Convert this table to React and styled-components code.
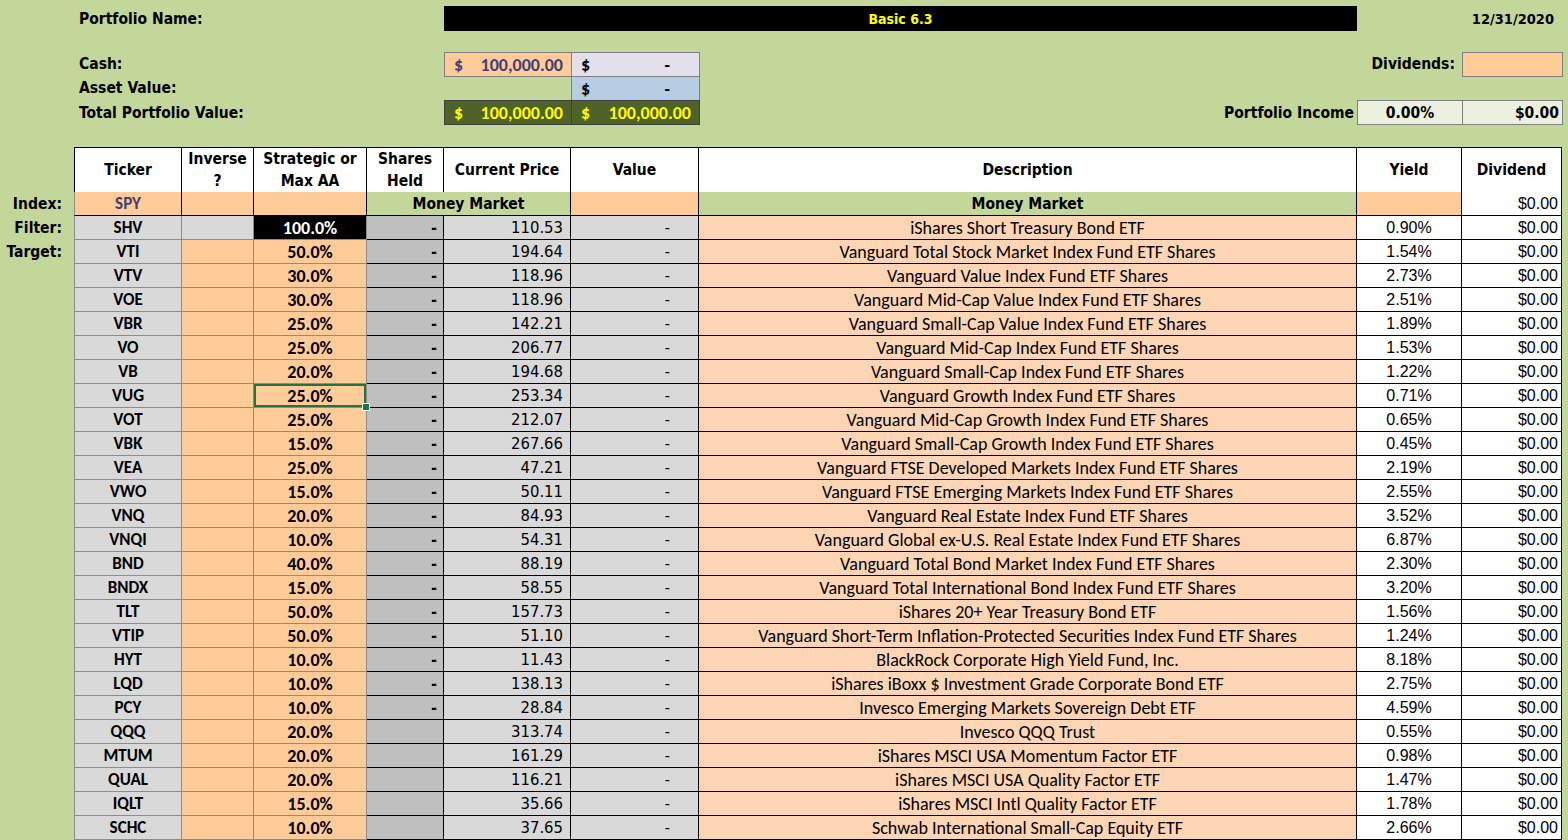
import React from 'react';
import styled, { createGlobalStyle, css } from 'styled-components';

const NARROW = `"Liberation Sans Narrow", "Arial Narrow", "DejaVu Sans Condensed", "Liberation Sans", sans-serif`;
const CALIBRI = `Carlito, Calibri, Lato, "Open Sans", sans-serif`;
const ARIAL = `"Liberation Sans", Arial, sans-serif`;

const COLS = '74px 108px 72px 113px 77px 127px 128px 658px 105px 100px 6px';

const GlobalStyle = createGlobalStyle`
  * { box-sizing: border-box; }
  html, body { margin: 0; padding: 0; background: #c4d79b; overflow: hidden; }
  body { font-family: ${NARROW}; color: #000; }
`;

const Sheet = styled.div`
  width: 1568px;
  height: 840px;
  background: #c4d79b;
  overflow: hidden;
`;

const Top = styled.div`
  display: grid;
  grid-template-columns: ${COLS};
  grid-template-rows: 6px 25px 21px 24px 24px 25px;
  margin-bottom: 22px;
`;

const TopLabel = styled.div`
  grid-column: ${({ $col }) => $col};
  grid-row: ${({ $row }) => $row};
  display: flex;
  align-items: center;
  justify-content: ${({ $right }) => ($right ? 'flex-end' : 'flex-start')};
  padding: ${({ $right, $pad }) => ($right ? `0 ${$pad ?? 7}px 0 0` : '0 0 0 5px')};
  font-family: ${NARROW};
  font-weight: bold;
  font-size: 15.5px;
  white-space: nowrap;
`;

const DateText = styled(TopLabel)`
  font-size: 14.5px;
  padding-right: 8px;
`;

const NameBar = styled.div`
  grid-column: 6 / 9;
  grid-row: 2;
  background: #000;
  color: #ffff00;
  display: flex;
  align-items: center;
  justify-content: center;
  font-family: ${NARROW};
  font-weight: bold;
  font-size: 14px;
`;

const fills = {
  input: { bg: '#ffcc99', fg: '#3f3f76' },
  lavender: { bg: '#e4dfec', fg: '#000' },
  blue: { bg: '#b8cce4', fg: '#000' },
  olive: { bg: '#4f6228', fg: '#ffff00' },
  pale: { bg: '#ebf1de', fg: '#000' },
};

const MoneyBox = styled.div`
  grid-column: ${({ $col }) => $col};
  grid-row: ${({ $row }) => $row};
  height: 25px;
  width: calc(100% + 1px);
  border: 1px solid ${({ $fill }) => ($fill === 'olive' ? '#3f3f3f' : '#7f7f7f')};
  background: ${({ $fill }) => fills[$fill].bg};
  color: ${({ $fill }) => fills[$fill].fg};
  display: flex;
  align-items: center;
  justify-content: space-between;
  padding: 0 8px 0 9px;
  font-family: ${CALIBRI};
  font-weight: bold;
  font-size: 18px;
  white-space: nowrap;
`;

const Dash = styled.span`
  padding-right: 21px;
`;

const StatBox = styled.div`
  grid-column: ${({ $col }) => $col};
  grid-row: ${({ $row }) => $row};
  height: 25px;
  width: calc(100% + 1px);
  border: 1px solid #7f7f7f;
  background: ${({ $fill }) => fills[$fill].bg};
  display: flex;
  align-items: center;
  justify-content: ${({ $align }) => $align || 'center'};
  padding: 0 3px;
  font-family: ${NARROW};
  font-weight: bold;
  font-size: 15.5px;
`;

const Row = styled.div`
  display: grid;
  grid-template-columns: ${COLS};
  height: ${({ $header }) => ($header ? '45px' : '24px')};
`;

const RowLabel = styled.div`
  display: flex;
  align-items: center;
  justify-content: flex-end;
  padding-right: 12px;
  font-family: ${NARROW};
  font-weight: bold;
  font-size: 15.5px;
`;

const HeaderCell = styled.div`
  background: #fff;
  border-top: 1px solid #000;
  border-bottom: 1px solid #000;
  border-right: 1px solid #000;
  ${({ $first }) => $first && css`border-left: 1px solid #000;`}
  display: flex;
  align-items: center;
  justify-content: center;
  text-align: center;
  line-height: 22px;
  font-family: ${NARROW};
  font-weight: bold;
  font-size: 15.5px;
`;

const baseCell = css`
  position: relative;
  display: flex;
  align-items: center;
  white-space: nowrap;
  overflow: visible;
  border-bottom: 1px solid ${({ $line }) => $line || '#000'};
  border-right: 1px solid ${({ $line }) => $line || '#000'};
`;

const TickerCell = styled.div`
  ${baseCell}
  border-left: 1px solid #8c8c8c;
  justify-content: center;
  background: ${({ $index }) => ($index ? '#ffcc99' : '#d9d9d9')};
  color: ${({ $index }) => ($index ? '#3f3f76' : '#000')};
  font-family: ${CALIBRI};
  font-weight: bold;
  font-size: 17px;
`;

const InverseCell = styled.div`
  ${baseCell}
  background: ${({ $grey }) => ($grey ? '#d9d9d9' : '#ffcc99')};
`;

const PctCell = styled.div`
  ${baseCell}
  justify-content: center;
  background: ${({ $dark }) => ($dark ? '#000' : '#ffcc99')};
  color: ${({ $dark }) => ($dark ? '#fff' : '#000')};
  font-family: ${CALIBRI};
  font-weight: bold;
  font-size: 18px;
  ${({ $selected }) =>
    $selected &&
    css`
      box-shadow: inset 0 0 0 2px #217346;
      &::after {
        content: '';
        position: absolute;
        right: -4px;
        bottom: -4px;
        width: 6px;
        height: 6px;
        background: #217346;
        border: 1px solid #fff;
        z-index: 2;
      }
    `}
`;

const SharesCell = styled.div`
  ${baseCell}
  justify-content: flex-end;
  padding-right: 6px;
  background: #bfbfbf;
  font-family: ${NARROW};
  font-weight: bold;
  font-size: 16px;
`;

const PriceCell = styled.div`
  ${baseCell}
  justify-content: flex-end;
  padding-right: 7px;
  background: #d9d9d9;
  font-family: ${NARROW};
  font-size: 16.5px;
`;

const ValueCell = styled.div`
  ${baseCell}
  justify-content: flex-end;
  padding-right: 28px;
  background: ${({ $input }) => ($input ? '#ffcc99' : '#d9d9d9')};
  font-family: ${NARROW};
  font-size: 16px;
`;

const MergedCell = styled.div`
  ${baseCell}
  grid-column: span ${({ $span }) => $span || 1};
  justify-content: center;
  background: #c4d79b;
  font-family: ${NARROW};
  font-weight: bold;
  font-size: 15.5px;
`;

const DescCell = styled.div`
  ${baseCell}
  justify-content: center;
  background: #fcd5b4;
  font-family: ${CALIBRI};
  font-size: 18px;
`;

const YieldCell = styled.div`
  ${baseCell}
  justify-content: center;
  background: ${({ $input }) => ($input ? '#ffcc99' : '#fff')};
  font-family: ${ARIAL};
  font-size: 16px;
`;

const DividendCell = styled.div`
  ${baseCell}
  justify-content: flex-end;
  padding-right: 3px;
  background: #fff;
  font-family: ${ARIAL};
  font-size: 16px;
`;

const holdings = [
  ['SHV', '100.0%', '110.53', 'iShares Short Treasury Bond ETF', '0.90%'],
  ['VTI', '50.0%', '194.64', 'Vanguard Total Stock Market Index Fund ETF Shares', '1.54%'],
  ['VTV', '30.0%', '118.96', 'Vanguard Value Index Fund ETF Shares', '2.73%'],
  ['VOE', '30.0%', '118.96', 'Vanguard Mid-Cap Value Index Fund ETF Shares', '2.51%'],
  ['VBR', '25.0%', '142.21', 'Vanguard Small-Cap Value Index Fund ETF Shares', '1.89%'],
  ['VO', '25.0%', '206.77', 'Vanguard Mid-Cap Index Fund ETF Shares', '1.53%'],
  ['VB', '20.0%', '194.68', 'Vanguard Small-Cap Index Fund ETF Shares', '1.22%'],
  ['VUG', '25.0%', '253.34', 'Vanguard Growth Index Fund ETF Shares', '0.71%'],
  ['VOT', '25.0%', '212.07', 'Vanguard Mid-Cap Growth Index Fund ETF Shares', '0.65%'],
  ['VBK', '15.0%', '267.66', 'Vanguard Small-Cap Growth Index Fund ETF Shares', '0.45%'],
  ['VEA', '25.0%', '47.21', 'Vanguard FTSE Developed Markets Index Fund ETF Shares', '2.19%'],
  ['VWO', '15.0%', '50.11', 'Vanguard FTSE Emerging Markets Index Fund ETF Shares', '2.55%'],
  ['VNQ', '20.0%', '84.93', 'Vanguard Real Estate Index Fund ETF Shares', '3.52%'],
  ['VNQI', '10.0%', '54.31', 'Vanguard Global ex-U.S. Real Estate Index Fund ETF Shares', '6.87%'],
  ['BND', '40.0%', '88.19', 'Vanguard Total Bond Market Index Fund ETF Shares', '2.30%'],
  ['BNDX', '15.0%', '58.55', 'Vanguard Total International Bond Index Fund ETF Shares', '3.20%'],
  ['TLT', '50.0%', '157.73', 'iShares 20+ Year Treasury Bond ETF', '1.56%'],
  ['VTIP', '50.0%', '51.10', 'Vanguard Short-Term Inflation-Protected Securities Index Fund ETF Shares', '1.24%'],
  ['HYT', '10.0%', '11.43', 'BlackRock Corporate High Yield Fund, Inc.', '8.18%'],
  ['LQD', '10.0%', '138.13', 'iShares iBoxx $ Investment Grade Corporate Bond ETF', '2.75%'],
  ['PCY', '10.0%', '28.84', 'Invesco Emerging Markets Sovereign Debt ETF', '4.59%'],
  ['QQQ', '20.0%', '313.74', 'Invesco QQQ Trust', '0.55%'],
  ['MTUM', '20.0%', '161.29', 'iShares MSCI USA Momentum Factor ETF', '0.98%'],
  ['QUAL', '20.0%', '116.21', 'iShares MSCI USA Quality Factor ETF', '1.47%'],
  ['IQLT', '15.0%', '35.66', 'iShares MSCI Intl Quality Factor ETF', '1.78%'],
  ['SCHC', '10.0%', '37.65', 'Schwab International Small-Cap Equity ETF', '2.66%'],
];

const labels = { 0: 'Filter:', 1: 'Target:' };
const GREY = '#8c8c8c';

const App = () => {
  return (
    <>
      <GlobalStyle />
      <Sheet>
        <Top>
          <TopLabel $col="2 / 6" $row={2}>Portfolio Name:</TopLabel>
          <NameBar>Basic 6.3</NameBar>
          <DateText $col="9 / 11" $row={2} $right $pad={8}>12/31/2020</DateText>

          <TopLabel $col="2 / 6" $row={4}>Cash:</TopLabel>
          <MoneyBox $col={6} $row={4} $fill="input"><span>$</span><span>100,000.00</span></MoneyBox>
          <MoneyBox $col={7} $row={4} $fill="lavender"><span>$</span><Dash>-</Dash></MoneyBox>
          <TopLabel $col={9} $row={4} $right>Dividends:</TopLabel>
          <StatBox $col={10} $row={4} $fill="input" />

          <TopLabel $col="2 / 6" $row={5}>Asset Value:</TopLabel>
          <MoneyBox $col={7} $row={5} $fill="blue"><span>$</span><Dash>-</Dash></MoneyBox>

          <TopLabel $col="2 / 6" $row={6}>Total Portfolio Value:</TopLabel>
          <MoneyBox $col={6} $row={6} $fill="olive"><span>$</span><span>100,000.00</span></MoneyBox>
          <MoneyBox $col={7} $row={6} $fill="olive"><span>$</span><span>100,000.00</span></MoneyBox>
          <TopLabel $col={8} $row={6} $right $pad={3}>Portfolio Income</TopLabel>
          <StatBox $col={9} $row={6} $fill="pale">0.00%</StatBox>
          <StatBox $col={10} $row={6} $fill="pale" $align="flex-end">$0.00</StatBox>
        </Top>

        <Row $header>
          <div />
          <HeaderCell $first>Ticker</HeaderCell>
          <HeaderCell>Inverse<br />?</HeaderCell>
          <HeaderCell>Strategic or<br />Max AA</HeaderCell>
          <HeaderCell>Shares<br />Held</HeaderCell>
          <HeaderCell>Current Price</HeaderCell>
          <HeaderCell>Value</HeaderCell>
          <HeaderCell>Description</HeaderCell>
          <HeaderCell>Yield</HeaderCell>
          <HeaderCell>Dividend</HeaderCell>
        </Row>

        <Row>
          <RowLabel>Index:</RowLabel>
          <TickerCell $index $line="#000">SPY</TickerCell>
          <InverseCell $line="#000" />
          <PctCell $line="#000" />
          <MergedCell $span={2}>Money Market</MergedCell>
          <ValueCell $input />
          <MergedCell>Money Market</MergedCell>
          <YieldCell $input />
          <DividendCell>$0.00</DividendCell>
        </Row>

        {holdings.map(([ticker, pct, price, desc, yld], i) => (
          <Row key={ticker}>
            <RowLabel>{labels[i] || ''}</RowLabel>
            <TickerCell $line={GREY}>{ticker}</TickerCell>
            <InverseCell $line={GREY} $grey={i === 0} />
            <PctCell $line={GREY} $dark={i === 0} $selected={ticker === 'VUG'}>{pct}</PctCell>
            <SharesCell>{i < 21 ? '-' : ''}</SharesCell>
            <PriceCell>{price}</PriceCell>
            <ValueCell>-</ValueCell>
            <DescCell>{desc}</DescCell>
            <YieldCell>{yld}</YieldCell>
            <DividendCell>$0.00</DividendCell>
          </Row>
        ))}
      </Sheet>
    </>
  );
};

export default App;
